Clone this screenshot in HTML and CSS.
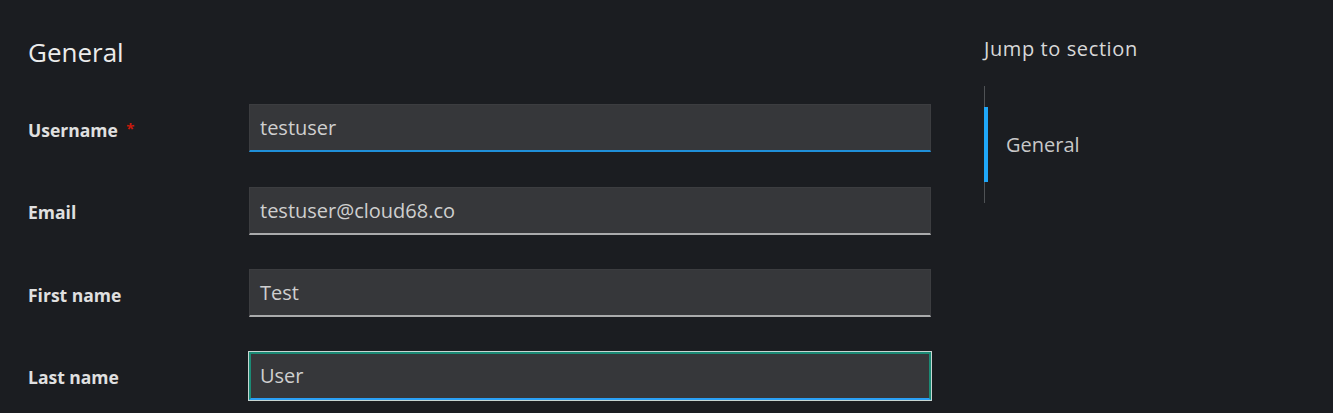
FILE: index.html
```html
<!DOCTYPE html>
<html lang="en">
<head>
<meta charset="utf-8">
<title>User details</title>
<link rel="stylesheet" href="styles.css">
</head>
<body>
<div class="page">
  <main class="main">
    <h1 class="title">General</h1>
    <form class="form">
      <div class="row">
        <label class="label">Username <span class="req">*</span></label>
        <div class="input input--active">testuser</div>
      </div>
      <div class="row">
        <label class="label">Email</label>
        <div class="input">testuser@cloud68.co</div>
      </div>
      <div class="row">
        <label class="label">First name</label>
        <div class="input">Test</div>
      </div>
      <div class="row">
        <label class="label">Last name</label>
        <div class="input input--focus">User</div>
      </div>
    </form>
  </main>
  <aside class="jump">
    <div class="jump-title">Jump to section</div>
    <ul class="jump-list">
      <li class="jump-item jump-item--current">General</li>
    </ul>
  </aside>
</div>
</body>
</html>
```

FILE: styles.css
```css
* { box-sizing: border-box; }
html, body {
  margin: 0;
  padding: 0;
  background: #1b1d21;
  height: 100%;
}
body {
  font-family: "Open Sans", "Noto Sans", sans-serif;
  color: #e0e0e0;
  overflow: hidden;
}
.page {
  display: flex;
  align-items: flex-start;
}
.main {
  width: 931px;
  padding-left: 28px;
  padding-top: 36px;
}
.title {
  margin: 0 0 36px 0;
  font-size: 26px;
  font-weight: 400;
  line-height: 32px;
  color: #ececec;
}
.form {
  display: flex;
  flex-direction: column;
  gap: 34.67px;
}
.row {
  display: grid;
  grid-template-columns: 221px 682px;
  align-items: center;
}
.label {
  font-size: 17.5px;
  font-weight: 700;
  color: #e0e0e0;
  padding-top: 3px;
}
.req {
  color: #c9190b;
  margin-left: 4px;
  font-size: 15px;
  vertical-align: top;
}
.input {
  height: 48px;
  background: #36373a;
  border: 1px solid #3c3d40;
  border-bottom: 2px solid #aaabac;
  padding: 0 10px;
  display: flex;
  align-items: center;
  font-size: 20px;
  color: #cfcfcf;
}
.input--active {
  border-bottom-color: #1f8fd8;
}
.input--focus {
  border: 2px solid #1b8a75;
  border-bottom-color: #2aa0f5;
  outline: 1px solid #c8d6d2;
  padding-left: 9px;
}
.jump {
  margin-left: 53px;
  padding-top: 35px;
}
.jump-title {
  font-size: 20px;
  line-height: 28px;
  letter-spacing: 0.6px;
  color: #d8d8d8;
}
.jump-list {
  list-style: none;
  margin: 23px 0 0 0;
  padding: 21px 0;
  border-left: 1px solid #4f5255;
}
.jump-item {
  height: 75px;
  display: flex;
  align-items: center;
  padding-left: 21px;
  margin-left: -1px;
  font-size: 20px;
  color: #c8c8c8;
}
.jump-item--current {
  border-left: 4px solid #1fa7f8;
  padding-left: 18px;
}
```
